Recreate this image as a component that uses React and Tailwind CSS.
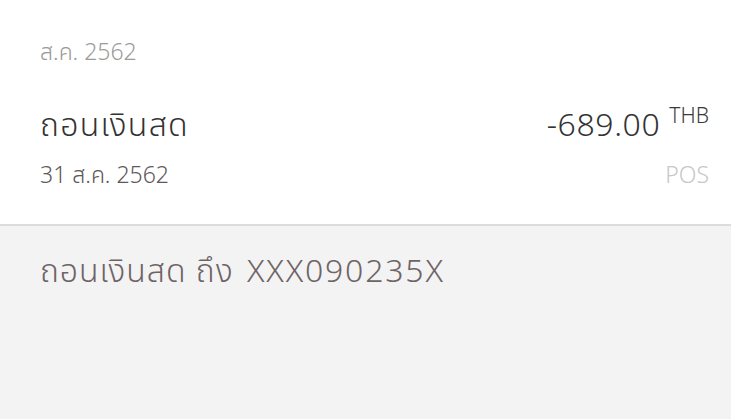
export default function App() {
  const font = { fontFamily: '"Noto Sans Thai", "Noto Sans", "Liberation Sans", sans-serif' };
  return (
    <div className="w-[731px] h-[419px] flex flex-col bg-[#f3f3f3] overflow-hidden font-light" style={font}>
      <div className="bg-white pl-[40px] pr-[22px] pt-[42px] pb-[36px] border-b-2 border-[#dcdcdc]">
        <div className="text-[23px] leading-none text-[#9b9b9b]">ส.ค. 2562</div>
        <div className="mt-[45px] flex items-start justify-between">
          <div className="text-[32px] leading-none tracking-[1.3px] text-[#333333]">ถอนเงินสด</div>
          <div className="flex items-start">
            <span className="text-[32px] leading-none tracking-[0.6px] text-[#333333]">-689.00</span>
            <span className="ml-[9px] mt-[-4px] text-[21px] leading-none text-[#3a3a3a]">THB</span>
          </div>
        </div>
        <div className="mt-[23px] flex justify-between">
          <div className="text-[23px] leading-none text-[#5e5859]">31 ส.ค. 2562</div>
          <div className="text-[23px] leading-none text-[#c8c8c8]">POS</div>
        </div>
      </div>
      <div className="pl-[40px] pt-[30px]">
        <div className="text-[32px] leading-none tracking-[1px] text-[#6e6466]">
          ถอนเงินสด ถึง <span className="ml-[4px] tracking-[1.8px]">XXX090235X</span>
        </div>
      </div>
    </div>
  );
}
